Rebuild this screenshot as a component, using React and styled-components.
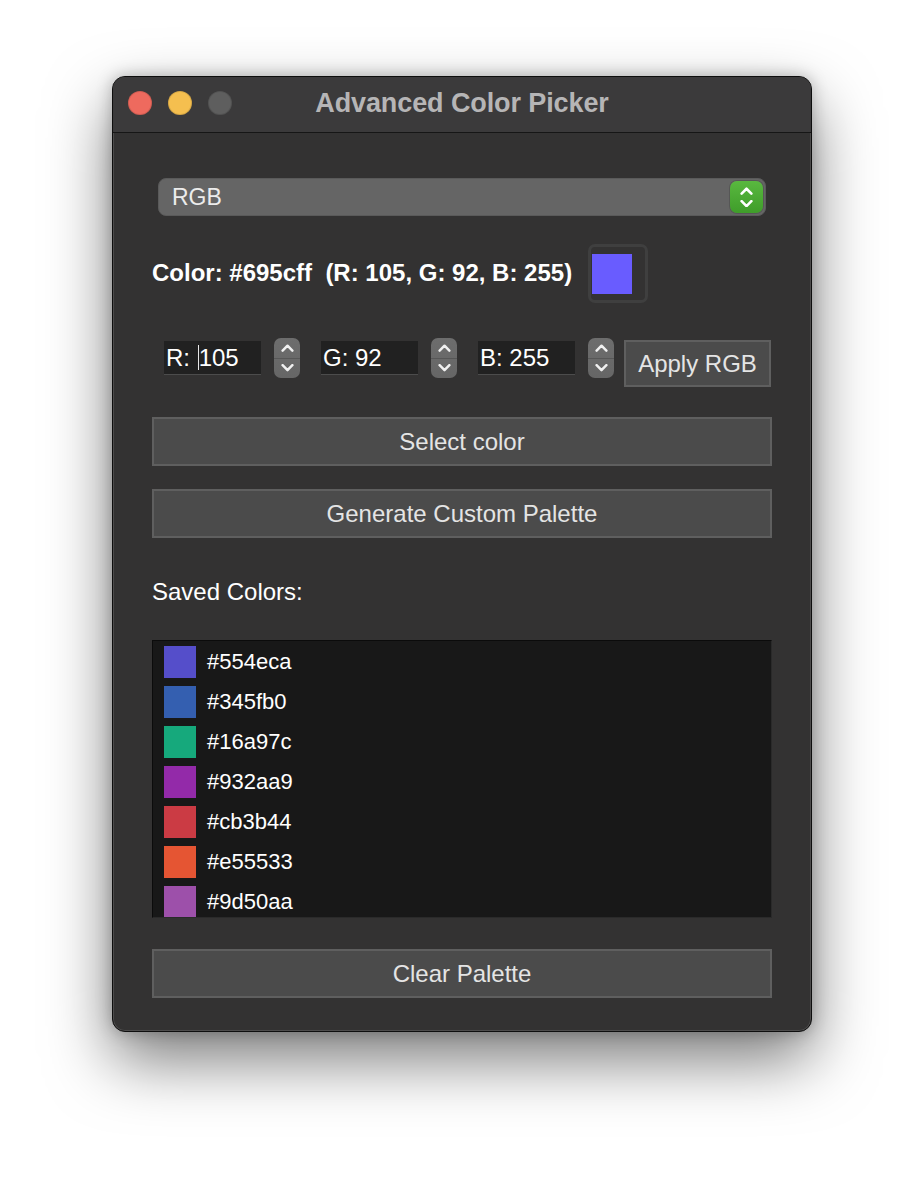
import React from "react";
import styled, { createGlobalStyle } from "styled-components";

const Global = createGlobalStyle`
  html, body { margin: 0; padding: 0; background: #ffffff; }
  body { font-family: "Liberation Sans", Arial, sans-serif; }
  #root { width: 924px; height: 1180px; }
`;

const Page = styled.div`
  width: 924px;
  height: 1180px;
  display: flex;
  justify-content: center;
  align-items: flex-start;
  padding-top: 76px;
  box-sizing: border-box;
  background: #ffffff;
`;

const Window = styled.div`
  width: 700px;
  height: 956px;
  box-sizing: border-box;
  border-radius: 13px;
  background: #333232;
  border: 1px solid #0e0e0e;
  box-shadow: inset 0 0 0 1px rgba(255, 255, 255, 0.13),
    0 28px 64px rgba(0, 0, 0, 0.52), 0 0 16px rgba(0, 0, 0, 0.25);
  overflow: hidden;
  display: flex;
  flex-direction: column;
`;

const TitleBar = styled.div`
  height: 55px;
  flex: none;
  position: relative;
  display: flex;
  align-items: center;
  justify-content: center;
  background: #3b3a3b;
  border-bottom: 1px solid #161616;
`;

const Lights = styled.div`
  position: absolute;
  left: 15px;
  top: 14px;
  display: flex;
  gap: 16px;
`;

const Light = styled.span`
  width: 24px;
  height: 24px;
  border-radius: 50%;
  background: ${(p) => p.$c};
  box-shadow: inset 0 0 0 1px rgba(0, 0, 0, 0.12);
`;

const Title = styled.div`
  font-family: "Liberation Sans", Arial, sans-serif;
  font-weight: 700;
  font-size: 27px;
  color: #b6b5b6;
  letter-spacing: -0.1px;
  padding-bottom: 2px;
`;

const Body = styled.div`
  flex: 1;
  display: flex;
  flex-direction: column;
  padding: 0 39px;
`;

const SelectBox = styled.div`
  margin: 45px 6px 0;
  height: 38px;
  box-sizing: border-box;
  border-radius: 8px;
  background: #656565;
  border: 1px solid #5a5a5a;
  display: flex;
  align-items: center;
  justify-content: space-between;
  padding: 0 2px 0 13px;
  font-size: 23px;
  color: #ececec;
`;

const GreenStep = styled.div`
  width: 33px;
  height: 32px;
  border-radius: 7px;
  background: linear-gradient(#59b83f, #3f9d2a);
  display: flex;
  align-items: center;
  justify-content: center;
  box-shadow: 0 0 0 1px rgba(0, 0, 0, 0.15);
`;

const ColorRow = styled.div`
  margin-top: 28px;
  height: 58px;
  display: flex;
  align-items: center;
  gap: 16px;
`;

const ColorLabel = styled.div`
  font-weight: 700;
  font-size: 24px;
  color: #ffffff;
  white-space: pre;
`;

const SwatchFrame = styled.div`
  width: 60px;
  height: 59px;
  box-sizing: border-box;
  border: 3px solid #3f3f3f;
  border-radius: 7px;
  padding: 7px 0 0 1px;
`;

const Swatch = styled.div`
  width: ${(p) => p.$size}px;
  height: ${(p) => p.$size}px;
  background: ${(p) => p.$c};
  flex: none;
`;

const RgbRow = styled.div`
  margin-top: 36px;
  height: 49px;
  display: flex;
  align-items: flex-start;
  padding-left: 12px;
`;

const Field = styled.div`
  width: 97px;
  height: 34px;
  margin-top: 3px;
  box-sizing: border-box;
  background: #212121;
  border-bottom: 1px solid #4c4c4c;
  font-size: 24px;
  color: #ffffff;
  display: flex;
  align-items: center;
  padding-left: 2px;
  line-height: 1;
`;

const Caret = styled.span`
  display: inline-block;
  width: 1px;
  height: 25px;
  background: #e8e8e8;
  margin: 0 0 0 1px;
`;

const Spin = styled.div`
  width: 26px;
  height: 40px;
  margin: 0 ${(p) => p.$mr}px 0 13px;
  border-radius: 7px;
  background: linear-gradient(#6d6d6d, #666666);
  display: flex;
  flex-direction: column;
  overflow: hidden;
  flex: none;
`;

const SpinHalf = styled.div`
  flex: 1;
  display: flex;
  align-items: center;
  justify-content: center;
  border-top: ${(p) => (p.$bottom ? "1px solid #575757" : "none")};
`;

const Button = styled.button`
  box-sizing: border-box;
  height: ${(p) => p.$h || 49}px;
  width: ${(p) => (p.$w ? p.$w + "px" : "100%")};
  margin-top: ${(p) => p.$mt || 0}px;
  background: #4b4b4b;
  border: 2px solid #5f5f5f;
  border-radius: 0;
  color: #e4e4e4;
  font-family: "Liberation Sans", Arial, sans-serif;
  font-size: 24px;
  padding: 0;
  flex: none;
`;

const SectionLabel = styled.div`
  margin-top: 42px;
  height: 24px;
  font-size: 24px;
  line-height: 24px;
  color: #ffffff;
`;

const List = styled.div`
  margin-top: 36px;
  height: 278px;
  box-sizing: border-box;
  background: #181818;
  border: 1px solid #0b0b0b;
  border-right-color: #2a2a2a;
  border-bottom-color: #2a2a2a;
  overflow: hidden;
  padding: 5px 0 0 11px;
  display: flex;
  flex-direction: column;
`;

const Item = styled.div`
  height: 40px;
  flex: none;
  display: flex;
  align-items: flex-start;
  gap: 11px;
`;

const ItemText = styled.span`
  font-size: 22px;
  line-height: 32px;
  color: #ffffff;
`;

const ChevUp = ({ color = "#f0f0f0", w = 13, sw = 2.3 }) => (
  <svg width={w} height={w * 0.6} viewBox="0 0 12 7">
    <polyline points="1.5,6 6,1.5 10.5,6" fill="none" stroke={color} strokeWidth={sw} strokeLinecap="round" strokeLinejoin="round" />
  </svg>
);
const ChevDown = ({ color = "#f0f0f0", w = 13, sw = 2.3 }) => (
  <svg width={w} height={w * 0.6} viewBox="0 0 12 7">
    <polyline points="1.5,1 6,5.5 10.5,1" fill="none" stroke={color} strokeWidth={sw} strokeLinecap="round" strokeLinejoin="round" />
  </svg>
);

const Spinner = ({ mr }) => (
  <Spin $mr={mr}>
    <SpinHalf>
      <ChevUp />
    </SpinHalf>
    <SpinHalf $bottom>
      <ChevDown />
    </SpinHalf>
  </Spin>
);

const StepIcon = styled.div`
  display: flex;
  flex-direction: column;
  gap: 5px;
  align-items: center;
`;

const saved = ["#554eca", "#345fb0", "#16a97c", "#932aa9", "#cb3b44", "#e55533", "#9d50aa"];

export default function App() {
  return (
    <>
      <Global />
      <Page>
        <Window>
          <TitleBar>
            <Lights>
              <Light $c="#ee6a5e" />
              <Light $c="#f5bf4f" />
              <Light $c="#5e5e5e" />
            </Lights>
            <Title>Advanced Color Picker</Title>
          </TitleBar>
          <Body>
            <SelectBox>
              <span>RGB</span>
              <GreenStep>
                <StepIcon>
                  <ChevUp color="#ffffff" w={13} sw={2.4} />
                  <ChevDown color="#ffffff" w={13} sw={2.4} />
                </StepIcon>
              </GreenStep>
            </SelectBox>

            <ColorRow>
              <ColorLabel>{"Color: #695cff  (R: 105, G: 92, B: 255)"}</ColorLabel>
              <SwatchFrame>
                <Swatch $size={40} $c="#695cff" />
              </SwatchFrame>
            </ColorRow>

            <RgbRow>
              <Field>
                R:&nbsp;<Caret />105
              </Field>
              <Spinner mr={21} />
              <Field>G: 92</Field>
              <Spinner mr={21} />
              <Field>B: 255</Field>
              <Spinner mr={10} />
              <Button $w={147} $h={47} $mt={2}>
                Apply RGB
              </Button>
            </RgbRow>

            <Button $mt={30}>Select color</Button>
            <Button $mt={23}>Generate Custom Palette</Button>

            <SectionLabel>Saved Colors:</SectionLabel>

            <List>
              {saved.map((c) => (
                <Item key={c}>
                  <Swatch $size={32} $c={c} />
                  <ItemText>{c}</ItemText>
                </Item>
              ))}
            </List>

            <Button $mt={31}>Clear Palette</Button>
          </Body>
        </Window>
      </Page>
    </>
  );
}
